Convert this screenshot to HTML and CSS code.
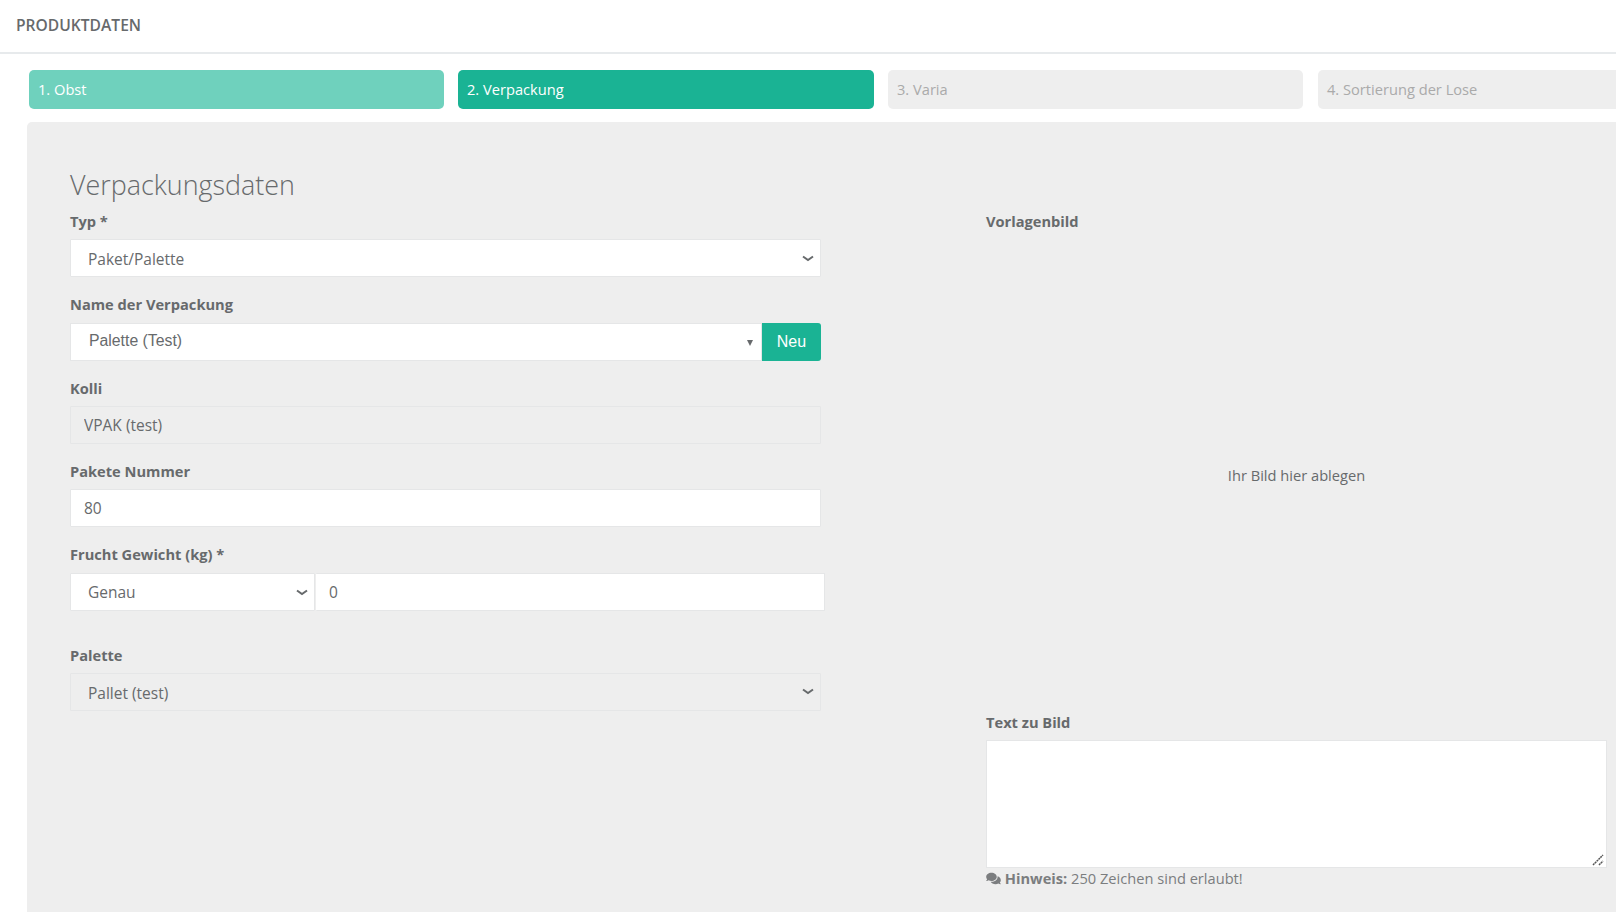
FILE: index.html
```html
<!DOCTYPE html>
<html lang="de">
  <head>
    <meta charset="UTF-8" />
    <title>Produktdaten</title>
    <link rel="stylesheet" href="styles.css">
  </head>
  <body>
    <div class="page-title">PRODUKTDATEN</div>

    <div class="wizard">
      <div class="steps">
        <div class="step done">1. Obst</div>
        <div class="step current">2. Verpackung</div>
        <div class="step">3. Varia</div>
        <div class="step">4. Sortierung der Lose</div>
      </div>

      <div class="panel">
        <h2>Verpackungsdaten</h2>
        <div class="columns">
          <div class="col-left">
            <div class="group">
              <label>Typ *</label>
              <select class="control">
                <option>Paket/Palette</option>
              </select>
            </div>

            <div class="group">
              <label class="label-low">Name der Verpackung</label>
              <div class="combo-row">
                <div class="combo">
                  <span>Palette (Test)</span>
                  <i class="caret"></i>
                </div>
                <button class="btn-new">Neu</button>
              </div>
            </div>

            <div class="group">
              <label>Kolli</label>
              <input class="control" type="text" value="VPAK (test)" readonly />
            </div>

            <div class="group">
              <label>Pakete Nummer</label>
              <input class="control" type="text" value="80" />
            </div>

            <div class="group group-weight">
              <label class="label-low">Frucht Gewicht (kg) *</label>
              <div class="weight-row">
                <select class="control">
                  <option>Genau</option>
                </select>
                <input class="control" type="text" value="0" />
              </div>
            </div>

            <div class="group">
              <label>Palette</label>
              <select class="control disabled">
                <option>Pallet (test)</option>
              </select>
            </div>
          </div>

          <div class="col-right">
            <label>Vorlagenbild</label>
            <div class="dropzone">Ihr Bild hier ablegen</div>
            <label>Text zu Bild</label>
            <div class="note-wrap">
              <textarea class="note"></textarea>
              <svg class="grip" width="12" height="12" viewBox="0 0 12 12"><path d="M1 11L11 1M7 11l4-4" fill="none" stroke="#555" stroke-width="1.5" stroke-dasharray="2 .6"/></svg>
            </div>
            <div class="hint">
              <svg class="hint-icon" viewBox="0 0 576 512"><path fill="currentColor" d="M416 192c0-88.4-93.1-160-208-160S0 103.6 0 192c0 34.3 14.1 65.9 38 92-13.4 30.2-35.5 54.2-35.8 54.5-2.2 2.3-2.8 5.7-1.5 8.7S4.8 352 8 352c36.6 0 66.9-12.3 88.7-25 32.2 15.7 70.3 25 111.3 25 114.9 0 208-71.6 208-160zm122 220c23.9-26 38-57.7 38-92 0-66.9-53.5-124.2-129.3-148.1.9 6.6 1.3 13.3 1.3 20.1 0 105.9-107.7 192-240 192-10.8 0-21.3-.8-31.7-1.9C207.8 439.6 281.8 480 368 480c41 0 79.1-9.2 111.3-25 21.8 12.7 52.1 25 88.7 25 3.2 0 6.1-1.9 7.3-4.8 1.3-2.9.7-6.3-1.5-8.7-.3-.3-22.4-24.2-35.8-54.5z"/></svg>
              <b>Hinweis:</b> 250 Zeichen sind erlaubt!
            </div>
          </div>
        </div>
      </div>
    </div>
  </body>
</html>
```

FILE: styles.css
```css
html,
body {
  height: 100%;
  overflow: hidden;
}
body {
  margin: 0;
  background: white;
  color: #676a6c;
  font-family: "Open Sans", sans-serif;
  font-size: 14.65px;
}
.page-title {
  height: 54px;
  line-height: 50px;
  padding-left: 16px;
  box-sizing: border-box;
  border-bottom: 2px solid #e7eaec;
  font-size: 15.6px;
  font-weight: 600;
}
.wizard {
  width: 1700px;
  padding: 16px 0 0 27px;
}
.steps {
  display: grid;
  grid-template-columns: 415px 416px 415px 416px;
  column-gap: 14px;
  margin-left: 2px;
}
.step {
  height: 39px;
  line-height: 39px;
  padding-left: 9px;
  border-radius: 5px;
  background: #eee;
  color: #aaa;
}
.step:last-child {
  margin-left: 1px;
}
.step.done {
  background: #6fd1bd;
  color: white;
}
.step.current {
  background: #1ab394;
  color: white;
}
.panel {
  margin-top: 13px;
  height: 800px;
  padding: 40px 0 0 43px;
  background: #eee;
  border-radius: 5px;
}
h2 {
  margin: 0;
  height: 50px;
  line-height: 46px;
  font-size: 26.9px;
  font-weight: 300;
}
.columns {
  display: flex;
}
.col-left {
  width: 751px;
  margin-right: 165px;
}
.col-right {
  width: 621px;
}
label {
  display: block;
  height: 20px;
  line-height: 18px;
  margin-bottom: 7px;
  font-weight: 700;
}
.label-low {
  margin-bottom: 8px;
}
.group {
  margin-bottom: 18.3px;
}
.group-weight {
  margin-bottom: 35.5px;
}
.control {
  display: block;
  width: 100%;
  height: 38px;
  box-sizing: border-box;
  padding: 0 13px;
  border: 1px solid #e5e6e7;
  border-radius: 1px;
  background-color: white;
  color: #676a6c;
  font-family: inherit;
  font-size: 15.5px;
}
select.control {
  appearance: none;
  padding: 2px 0 0 17px;
  background-image: url("data:image/svg+xml,%3Csvg xmlns='http://www.w3.org/2000/svg' width='12' height='7'%3E%3Cpath d='M1 1.5l5 3.5 5-3.5' fill='none' stroke='%23676a6c' stroke-width='2'/%3E%3C/svg%3E");
  background-repeat: no-repeat;
  background-position: right 6px center;
}
input.control[readonly],
select.disabled {
  background-color: #eee;
}
.combo-row {
  display: flex;
  height: 38px;
  margin-bottom: -1px;
}
.combo {
  flex: 1;
  display: flex;
  align-items: center;
  justify-content: space-between;
  box-sizing: border-box;
  padding: 0 8px 0 18px;
  border: 1px solid #e5e6e7;
  background: white;
  font-family: "Liberation Sans", Arial, sans-serif;
  font-size: 15.8px;
}
.combo span {
  margin-top: -3px;
}
.caret {
  width: 0;
  height: 0;
  border-left: 3px solid transparent;
  border-right: 3px solid transparent;
  border-top: 6px solid #676a6c;
  margin-top: 2px;
}
.btn-new {
  width: 59px;
  padding: 0;
  border: none;
  border-radius: 0 3px 3px 0;
  background: #1ab394;
  color: white;
  font-family: "Liberation Sans", Arial, sans-serif;
  font-size: 16px;
}
.weight-row {
  display: flex;
  width: 755px;
  margin-bottom: -1px;
}
.weight-row select {
  width: 245px;
  flex: none;
  padding-top: 0;
}
.weight-row input {
  flex: 1;
  border-left: none;
  margin-left: 1px;
}
.dropzone {
  height: 472px;
  padding-bottom: 2px;
  display: flex;
  align-items: center;
  justify-content: center;
}
.note-wrap {
  position: relative;
}
.note {
  display: block;
  width: 100%;
  height: 128px;
  box-sizing: border-box;
  border: 1px solid #e5e6e7;
  background: white;
  resize: none;
}
.grip {
  position: absolute;
  right: 3px;
  bottom: 2px;
}
.hint {
  line-height: 20px;
  color: #7b7d7f;
}
.hint-icon {
  width: 15px;
  height: 13px;
  vertical-align: -1px;
}
```
